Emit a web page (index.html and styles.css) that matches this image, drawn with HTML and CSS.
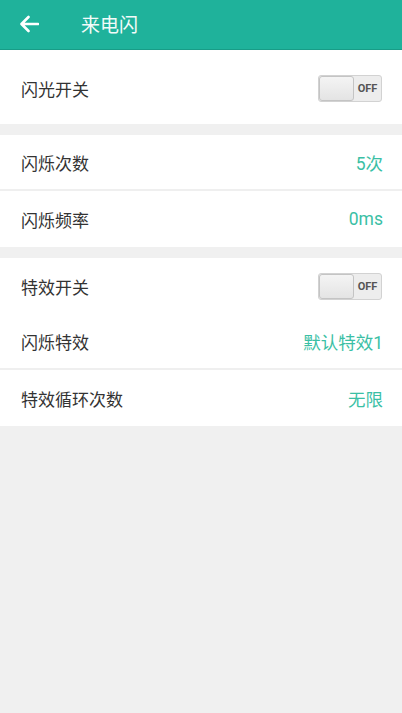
FILE: index.html
```html
<!DOCTYPE html>
<html lang="zh-CN">
<head>
    <meta charset="UTF-8">
    <meta name="viewport" content="width=device-width, initial-scale=1.0">
    <title>来电闪</title>
    <link rel="stylesheet" href="styles.css">
</head>
<body>
    <div class="toolbar">
        <svg class="back" width="20" height="18" viewBox="0 0 20 18">
            <path d="M19 9H3M9.5 2L2.5 9l7 7" fill="none" stroke="#fff" stroke-width="2.6" stroke-linecap="round" stroke-linejoin="round"/>
        </svg>
        <span class="title">来电闪</span>
    </div>

    <div class="section first">
        <div class="row">
            <span class="label">闪光开关</span>
            <div class="switch"><span class="knob"></span><span class="state">OFF</span></div>
        </div>
    </div>

    <div class="section">
        <div class="row divided">
            <span class="label">闪烁次数</span>
            <span class="value">5次</span>
        </div>
        <div class="row">
            <span class="label">闪烁频率</span>
            <span class="value">0ms</span>
        </div>
    </div>

    <div class="section">
        <div class="row">
            <span class="label">特效开关</span>
            <div class="switch"><span class="knob"></span><span class="state">OFF</span></div>
        </div>
        <div class="row divided">
            <span class="label">闪烁特效</span>
            <span class="value">默认特效1</span>
        </div>
        <div class="row">
            <span class="label">特效循环次数</span>
            <span class="value">无限</span>
        </div>
    </div>
</body>
</html>
```

FILE: styles.css
```css
body {
    margin: 0;
    background: #f0f0f0;
    font-family: Roboto, "Noto Sans CJK SC", sans-serif;
    min-height: 100vh;
}
.toolbar {
    height: 49px;
    background: #1fb29b;
    border-bottom: 1px solid #189c87;
    display: flex;
    align-items: center;
    padding-left: 19px;
}
.back {
    margin-top: -2px;
}
.title {
    color: #f2fbf9;
    font-size: 19px;
    margin-left: 42px;
    margin-top: -2px;
}
.section {
    background: #fff;
    margin-bottom: 11px;
}
.section.first {
    padding: 10px 0 8px;
}
.row {
    height: 56px;
    display: flex;
    align-items: center;
    justify-content: space-between;
    padding: 0 19px 0 21px;
    box-sizing: border-box;
}
.row.divided {
    border-bottom: 2px solid #efefef;
}
.label {
    font-size: 17px;
    color: #333;
}
.value {
    font-size: 17.5px;
    color: #3bbfa5;
}
.switch {
    width: 62px;
    height: 25px;
    border: 1px solid #d2d2d2;
    border-radius: 3px;
    background: #ededed;
    display: flex;
    align-items: center;
    margin-right: 1px;
}
.knob {
    width: 33px;
    height: 23px;
    border: 1px solid #c4c4c4;
    border-radius: 3px;
    background: linear-gradient(#f4f4f4, #e4e4e4);
}
.state {
    flex: 1;
    text-align: center;
    font-size: 11px;
    font-weight: bold;
    color: #555;
}
```
